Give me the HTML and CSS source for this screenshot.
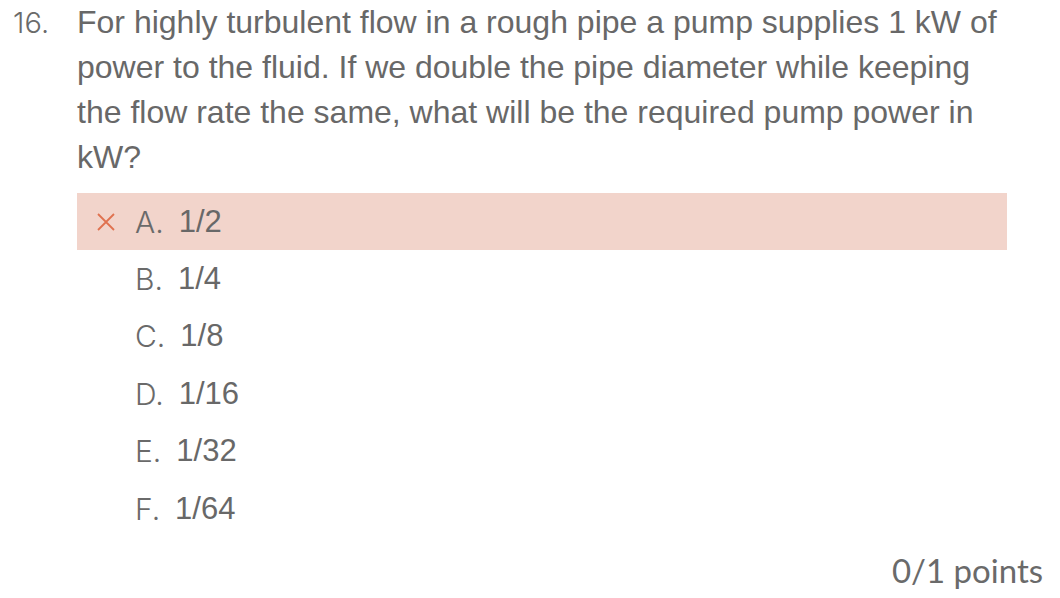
FILE: index.html
```html
<!DOCTYPE html>
<html>
<head>
<meta charset="utf-8">
<link rel="stylesheet" href="styles.css">
</head>
<body>
<div class="page">
  <div class="question">
    <div class="num">16.</div>
    <div class="body">
      <p class="text">For highly turbulent flow in a rough pipe a pump supplies 1 kW of power to the fluid. If we double the pipe diameter while keeping the flow rate the same, what will be the required pump power in kW?</p>
      <ul class="options">
        <li class="option wrong">
          <span class="mark"><svg viewBox="0 0 20 20" width="20" height="20"><path d="M2 2 L18 18 M18 2 L2 18" stroke="#e0714f" stroke-width="1.8" fill="none"/></svg></span>
          <span class="label">A.</span><span class="value">1/2</span>
        </li>
        <li class="option"><span class="mark"></span><span class="label">B.</span><span class="value">1/4</span></li>
        <li class="option"><span class="mark"></span><span class="label">C.</span><span class="value">1/8</span></li>
        <li class="option"><span class="mark"></span><span class="label">D.</span><span class="value">1/16</span></li>
        <li class="option"><span class="mark"></span><span class="label">E.</span><span class="value">1/32</span></li>
        <li class="option"><span class="mark"></span><span class="label">F.</span><span class="value">1/64</span></li>
      </ul>
    </div>
  </div>
  <div class="points">0/1 points</div>
</div>
</body>
</html>
```

FILE: styles.css
```css
html, body {
  margin: 0;
  padding: 0;
  background: #ffffff;
}
body {
  font-family: "Liberation Sans", Arial, sans-serif;
  color: #686868;
}
.page {
  width: 1060px;
  height: 598px;
  display: flex;
  flex-direction: column;
}
.question {
  display: grid;
  grid-template-columns: 77px 930px;
}
.num {
  font-family: Inter, "Liberation Sans", sans-serif;
  font-weight: 300;
  font-size: 29px;
  line-height: 45px;
  padding-left: 13px;
  color: #6a6a6a;
}
.text {
  margin: 0;
  font-size: 32px;
  line-height: 45px;
}
.options {
  list-style: none;
  margin: 13px 0 0 0;
  padding: 0;
}
.option {
  display: flex;
  align-items: center;
  height: 57.5px;
  font-size: 30px;
}
.option.wrong {
  background: #f2d4cb;
  height: 57px;
}
.mark {
  width: 58px;
  padding-left: 19px;
  box-sizing: border-box;
  display: flex;
  align-items: center;
}
.label {
  font-family: Inter, "Liberation Sans", sans-serif;
  font-weight: 300;
  font-size: 30px;
  margin-right: 15px;
  color: #6a6a6a;
}
.value {
  font-size: 31px;
}
.points {
  margin-top: 12px;
  align-self: flex-end;
  margin-right: 17px;
  font-family: Lato, "Liberation Sans", sans-serif;
  font-weight: 400;
  font-size: 33px;
  color: #6a6a6a;
}
```
